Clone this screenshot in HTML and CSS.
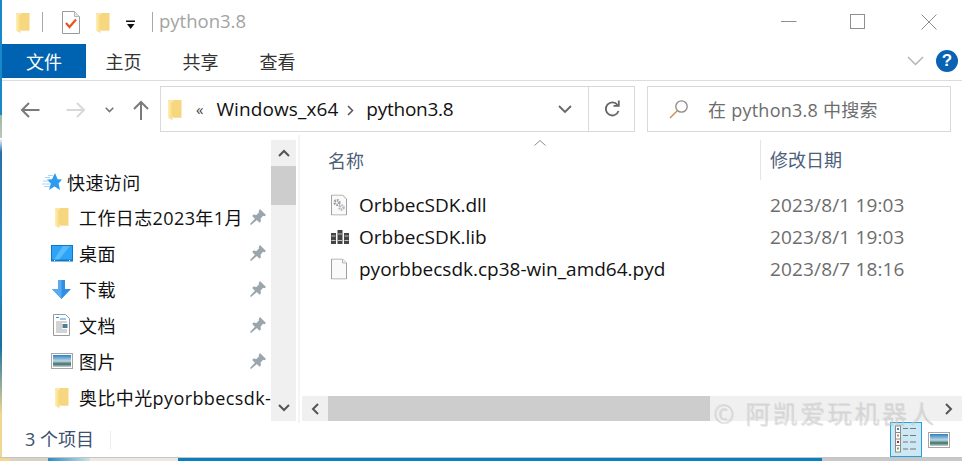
FILE: index.html
```html
<!DOCTYPE html>
<html lang="zh">
<head>
<meta charset="utf-8">
<title>python3.8</title>
<link rel="stylesheet" href="styles.css">
</head>
<body>
<svg class="defs" width="0" height="0" aria-hidden="true">
  <defs>
    <linearGradient id="fg" x1="0" y1="0" x2="1" y2="0"><stop offset="0" stop-color="#fff0b8"/><stop offset="1" stop-color="#f8d878"/></linearGradient>
    <linearGradient id="sky" x1="0" y1="0" x2="0" y2="1"><stop offset="0" stop-color="#2f7fc4"/><stop offset=".5" stop-color="#bcd8e4"/><stop offset=".75" stop-color="#3f6f62"/><stop offset="1" stop-color="#c8d4dc"/></linearGradient>
    <symbol id="folder" viewBox="0 0 14 21"><path fill="#f6d67f" d="M0 1h13.5v17H5v-.5H0z"/><path fill="url(#fg)" d="M0 1l4.500 1.800V21L0 19z"/><path fill="#fbe7a9" d="M0 1h5v2H0z"/><path fill="#e8c060" d="M5 18h8.500v.5H5z"/></symbol>
    <symbol id="pin" viewBox="0 0 16 16"><path fill="#9aa5ac" d="M10 0l6 6-1.500 1.200-1.300-.4-2.600 2.700.3 2.800-1.400 1.400-2.600-2.600L1 16l-1-1 4.900-5.300-2.700-2.700 1.400-1.400 2.800.3 2.700-2.600-.4-1.300z"/></symbol>
    <symbol id="picture" viewBox="0 0 22 16"><rect x=".5" y=".5" width="21" height="15" fill="#fff" stroke="#a6a6a6"/><rect x="2" y="2" width="18" height="12" fill="url(#sky)"/></symbol>
  </defs>
</svg>
<div class="window">
  <header class="titlebar">
    <div class="qat">
      <svg class="i-folder" width="14" height="21"><use href="#folder"/></svg>
      <span class="vsep sep-a"></span>
      <svg class="i-doc" width="18" height="23" viewBox="0 0 18 23"><path fill="#fff" stroke="#9a9a9a" d="M.5.500h12l5 5v17H.5z"/><path fill="#e6e6e6" stroke="#b5b5b5" d="M12.500.500v5h5"/><path fill="none" stroke="#e8541e" stroke-width="2.200" d="M4 12l3.500 4L14 8.500"/></svg>
      <svg class="i-folder2" width="14" height="21"><use href="#folder"/></svg>
      <svg class="i-drop" width="12" height="10" viewBox="0 0 12 10"><path d="M1 .500h9v1.400H1zM2 4h7.500L5.700 9z" fill="#111"/></svg>
      <span class="vsep sep-b"></span>
      <span class="win-title">python3.8</span>
    </div>
    <div class="winctl">
      <svg width="16" height="16" viewBox="0 0 16 16"><path d="M0 7.500h15.500" stroke="#8f8f8f"/></svg>
      <svg class="ctl-max" width="16" height="16" viewBox="0 0 16 16"><rect x=".5" y=".5" width="14" height="14" fill="none" stroke="#8f8f8f"/></svg>
      <svg width="16" height="16" viewBox="0 0 16 16"><path d="M.5.500l15 15M15.500.500l-15 15" stroke="#8f8f8f"/></svg>
    </div>
  </header>
  <nav class="ribbon">
    <span class="tab tab-file">文件</span>
    <span class="tab">主页</span>
    <span class="tab">共享</span>
    <span class="tab">查看</span>
    <span class="spring"></span>
    <svg class="i-rchev" width="17" height="10" viewBox="0 0 17 10"><path d="M1 1l7.500 7.500L16 1" fill="none" stroke="#b4b4b4" stroke-width="1.500"/></svg>
    <span class="help">?</span>
  </nav>
  <section class="navbar">
    <div class="navbtns">
      <svg width="20" height="16" viewBox="0 0 20 16"><path d="M19.500 8H2M9 1L2 8l7 7" fill="none" stroke="#7a7a7a" stroke-width="2"/></svg>
      <svg width="20" height="16" viewBox="0 0 20 16"><path d="M.5 8H18M11 1l7 7-7 7" fill="none" stroke="#d8d8d8" stroke-width="2"/></svg>
      <svg width="9" height="6" viewBox="0 0 9 6"><path d="M.7.700l3.800 3.800L8.300.700" fill="none" stroke="#777" stroke-width="1.600"/></svg>
      <svg width="16" height="20" viewBox="0 0 16 20"><path d="M8 20V2M1 9l7-7 7 7" fill="none" stroke="#7a7a7a" stroke-width="2"/></svg>
    </div>
    <div class="address">
      <svg class="i-addr-folder" width="14" height="21"><use href="#folder"/></svg>
      <span class="crumb-more">«</span>
      <span class="crumb">Windows_x64</span>
      <svg class="i-crumb" width="7" height="11" viewBox="0 0 7 11"><path d="M1 1l4.500 4.500L1 10" fill="none" stroke="#555" stroke-width="1.500"/></svg>
      <span class="crumb crumb-last">python3.8</span>
      <span class="spring"></span>
      <svg class="i-addr-chev" width="14" height="9" viewBox="0 0 14 9"><path d="M1 1l6 6 6-6" fill="none" stroke="#666" stroke-width="1.800"/></svg>
      <span class="refresh">
        <svg width="16" height="18" viewBox="0 0 16 18"><path d="M13.500 5A6.500 6.500 0 1 0 14.500 11" fill="none" stroke="#666" stroke-width="1.800"/><path d="M9.500 5.800h5.300V.500" fill="none" stroke="#666" stroke-width="1.800"/></svg>
      </span>
    </div>
    <div class="search">
      <svg width="20" height="20" viewBox="0 0 20 20"><circle cx="12.500" cy="7.500" r="5.700" fill="none" stroke="#8a8a8a" stroke-width="1.300"/><path d="M8.500 11.500L1 19" stroke="#c58f55" stroke-width="1.500"/></svg>
      <span class="search-text">在 python3.8 中搜索</span>
    </div>
  </section>
  <main class="content">
    <aside class="sidebar">
      <div class="tree">
        <div class="tree-row tree-quick">
          <svg class="i-star" width="20" height="18" viewBox="0 0 20 18"><path fill="#2d9bf0" d="M13 0l2.600 6.200L20 6.500l-3.400 4L18 17l-5.500-3.400L7 17l1.800-6.500L5 6.500l5-.3z"/><path d="M6 2.500h5M3 4.500h5M1 8h6M0 11h8M2 13.500h6" stroke="#a8d4f6"/></svg>
          <span class="tree-label">快速访问</span>
        </div>
        <div class="tree-row"><span class="slot"><svg width="14" height="21"><use href="#folder"/></svg></span><span class="tree-label">工作日志2023年1月</span><svg class="pin" width="16" height="16"><use href="#pin"/></svg></div>
        <div class="tree-row"><span class="slot"><svg width="22" height="17" viewBox="0 0 22 17"><rect width="22" height="16.500" fill="#0f78c8"/><rect x="1" y="1" width="20" height="13.500" fill="#2da4f8"/><path d="M12 1h7L8 14.500H3z" fill="#58bcfc"/><path d="M3 15.500h1M18 15.500h1" stroke="#fff"/></svg></span><span class="tree-label">桌面</span><svg class="pin" width="16" height="16"><use href="#pin"/></svg></div>
        <div class="tree-row"><span class="slot"><svg width="19" height="19" viewBox="0 0 19 19"><path d="M6 0h7v9h6l-9.500 10L0 9h6z" fill="#2f8fe6"/><path d="M6 0h3.500v19L0 9h6z" fill="#5aaaf0"/></svg></span><span class="tree-label">下载</span><svg class="pin" width="16" height="16"><use href="#pin"/></svg></div>
        <div class="tree-row"><span class="slot"><svg width="17" height="22" viewBox="0 0 17 22"><path d="M.5.500h12l4 4v17H.5z" fill="#fff" stroke="#9a9a9a"/><path d="M3 3.500h3M7 5h6" stroke="#2d8fe0"/><path d="M3 8h11M3 10h6M3 12h6M3 14h6M3 16h11M3 18h11" stroke="#a8a8a8"/><rect x="9.500" y="10" width="5" height="4" fill="#4a7f96"/></svg></span><span class="tree-label">文档</span><svg class="pin" width="16" height="16"><use href="#pin"/></svg></div>
        <div class="tree-row"><span class="slot"><svg width="22" height="16"><use href="#picture"/></svg></span><span class="tree-label">图片</span><svg class="pin" width="16" height="16"><use href="#pin"/></svg></div>
        <div class="tree-row"><span class="slot"><svg width="14" height="21"><use href="#folder"/></svg></span><span class="tree-label clip">奥比中光pyorbbecsdk-</span></div>
      </div>
      <div class="vscroll">
        <span class="sb-btn"><svg width="12" height="8" viewBox="0 0 12 8"><path d="M1 7l5-5 5 5" fill="none" stroke="#555" stroke-width="2"/></svg></span>
        <span class="sb-thumb"></span>
        <span class="spring"></span>
        <span class="sb-btn"><svg width="12" height="8" viewBox="0 0 12 8"><path d="M1 1l5 5 5-5" fill="none" stroke="#555" stroke-width="2"/></svg></span>
      </div>
    </aside>
    <section class="files">
      <svg class="sort" width="12" height="6" viewBox="0 0 12 6"><path d="M.5 5.500L6 .500l5.500 5" fill="none" stroke="#8c8c8c"/></svg>
      <div class="colhead">
        <span class="col-name">名称</span>
        <span class="col-date">修改日期</span>
      </div>
      <div class="filelist">
        <div class="file-row"><svg class="file-icon" width="16" height="21" viewBox="0 0 16 21"><path d="M.5.500h11l4 4v16H.5z" fill="#fafafa" stroke="#a0a0a0"/><circle cx="6" cy="8" r="2.300" fill="none" stroke="#a0a0a0" stroke-width="2.600" stroke-dasharray="1.500 .9"/><circle cx="10.500" cy="13" r="2.100" fill="none" stroke="#aeb8c2" stroke-width="2.400" stroke-dasharray="1.400 .8"/></svg><span class="file-name">OrbbecSDK.dll</span><span class="file-date">2023/8/1 19:03</span></div>
        <div class="file-row"><svg class="file-icon" width="18" height="14" viewBox="0 0 18 14"><path d="M0 3h5v11H0zM6.500 0h5v14h-5zM13 3h5v11h-5z" fill="#454545"/><path d="M.5 6h4M7 4h4M13.500 6h4M.5 10.500h4M7 10.500h4M13.500 10.500h4" stroke="#c4c4c4"/></svg><span class="file-name">OrbbecSDK.lib</span><span class="file-date">2023/8/1 19:03</span></div>
        <div class="file-row"><svg class="file-icon" width="16" height="21" viewBox="0 0 16 21"><path d="M.5.500h11l4 4v16H.5z" fill="#fafafa" stroke="#a0a0a0"/><path d="M11.500.500v4h4" fill="#eee" stroke="#b8b8b8"/></svg><span class="file-name">pyorbbecsdk.cp38-win_amd64.pyd</span><span class="file-date">2023/8/7 18:16</span></div>
      </div>
      <div class="hscroll">
        <span class="sb-btn-h"><svg width="8" height="12" viewBox="0 0 8 12"><path d="M7 1L2 6l5 5" fill="none" stroke="#555" stroke-width="2"/></svg></span>
        <span class="hs-thumb"></span>
        <span class="spring"></span>
        <span class="sb-btn-h"><svg width="8" height="12" viewBox="0 0 8 12"><path d="M1 1l5 5-5 5" fill="none" stroke="#555" stroke-width="2"/></svg></span>
      </div>
    </section>
  </main>
  <footer class="status">
    <span class="count">3 个项目</span>
    <span class="status-sep"></span>
    <span class="spring"></span>
    <span class="view-active">
      <svg width="22" height="28" viewBox="0 0 22 28"><rect x=".5" y="1" width="5" height="26" fill="#fff" stroke="#8a8a8a"/><path d="M.5 7.500h5M.5 14h5M.5 20.500h5" stroke="#8a8a8a"/><path fill="#3f7fc0" d="M2 3h2v2H2z"/><path fill="#c09040" d="M2 9.500h2v2H2z"/><path fill="#c62020" d="M2 16h2v2H2z"/><path fill="#80b040" d="M2 22.500h2v2H2z"/><path d="M8 3.500h5M15 3.500h6M8 10.500h5M15 10.500h6M8 17h5M15 17h6M8 24h5M15 24h6" stroke="#777"/></svg>
    </span>
    <svg class="view-large" width="22" height="16"><use href="#picture"/></svg>
  </footer>
  <div class="watermark">© 阿凯爱玩机器人</div>
  <div class="desk-left"></div>
  <div class="desk-bottom"></div>
</div>
</body>
</html>
```
FILE: styles.css
```css
* { box-sizing: border-box; }
html, body { margin: 0; padding: 0; background: #fff; overflow: hidden; }
body { font-family: "Open Sans", "Noto Sans CJK SC", sans-serif; color: #111; }
svg { display: block; flex: none; }
.defs { position: absolute; }
.spring { flex: 1; }

.window { position: relative; width: 962px; height: 461px; padding-left: 2px; padding-bottom: 4px; display: flex; flex-direction: column; overflow: hidden; }

.titlebar { height: 44px; display: flex; align-items: center; justify-content: space-between; }
.qat { display: flex; align-items: center; padding-left: 14px; }
.vsep { width: 1px; height: 20px; background: #a8a8a8; }
.sep-a { margin-left: 12px; }
.i-doc { margin-left: 19px; }
.i-folder2 { margin-left: 16px; }
.i-drop { margin-left: 15px; margin-top: 6px; }
.sep-b { margin-left: 15px; }
.win-title { margin-left: 6px; margin-top: -2px; font-size: 18.500px; color: #a3a3a3; line-height: 24px; }
.winctl { display: flex; padding-right: 25px; margin-top: -1px; }
.ctl-max { margin: 0 55px 0 53px; }

.ribbon { height: 37px; padding-bottom: 3px; display: flex; align-items: center; border-bottom: 1px solid #dcdcdc; }
.tab { font-size: 18px; width: 77px; text-align: center; color: #333; line-height: 36px; height: 34px; }
.tab-file { width: 84px; background: #0063b1; color: #fff; }
.tab-file + .tab { margin-left: -1px; }
.i-rchev { margin-right: 12px; }
.help { width: 22px; height: 22px; margin-right: 4px; border-radius: 50%; background: #0a62b5; color: #fff; font: bold 17px/22px "Liberation Sans", sans-serif; text-align: center; }

.navbar { height: 54px; display: flex; align-items: center; padding-top: 5px; padding-bottom: 3px; }
.navbtns { width: 158px; display: flex; align-items: center; padding-left: 18px; padding-top: 2px; }
.navbtns svg:nth-child(2) { margin-left: 26px; }
.navbtns svg:nth-child(3) { margin-left: 19px; }
.navbtns svg:nth-child(4) { margin-left: 19px; }
.address { width: 475px; height: 46px; border: 1px solid #d9d9d9; display: flex; align-items: center; padding-left: 7px; }
.crumb-more { margin-left: 14px; font-size: 15px; color: #444; }
.crumb { font-size: 19px; letter-spacing: .1px; color: #111; }
.crumb-last { letter-spacing: -.25px; }
.crumb-more + .crumb { margin-left: 13px; }
.i-crumb { margin: 2px 12px 0 9px; }
.i-addr-chev { margin-right: 16px; }
.refresh { width: 46px; height: 100%; border-left: 1px solid #d9d9d9; display: flex; align-items: center; justify-content: center; }
.search { width: 304px; height: 46px; margin-left: 12px; border: 1px solid #d9d9d9; display: flex; align-items: center; padding-left: 21px; }
.search-text { margin-left: 19px; font-size: 18px; letter-spacing: .25px; color: #6d6d6d; }

.content { height: 288px; display: flex; }
.sidebar { width: 298px; display: flex; border-right: 2px solid #f5f5f5; padding-right: 2px; padding-top: 5px; }
.tree { width: 269px; padding-top: 20px; overflow: hidden; }
.tree-row { height: 36px; display: flex; align-items: center; padding-left: 47px; position: relative; }
.tree-quick { padding-left: 40px; margin-top: 4px; height: 35px; }
.i-star { margin-right: 5px; }
.slot { width: 30px; display: flex; justify-content: center; flex: none; padding-right: 5px; }
.tree-label { font-size: 18px; letter-spacing: .4px; color: #111; white-space: nowrap; }
.clip { overflow: hidden; }
.pin { margin-left: auto; margin-right: 5px; }
.vscroll { width: 25px; background: #f0f0f0; display: flex; flex-direction: column; margin-bottom: 2px; }
.sb-btn { height: 26px; display: flex; align-items: center; justify-content: center; flex: none; }
.sb-thumb { height: 39px; background: #cdcdcd; flex: none; }

.files { flex: 1; margin-left: 2px; position: relative; display: flex; flex-direction: column; min-width: 0; padding-top: 5px; }
.sort { position: absolute; left: 232px; top: 5px; }
.colhead { height: 40px; display: flex; align-items: center; padding-left: 26px; position: relative; }
.col-name { width: 432px; font-size: 18px; color: #4c607a; }
.col-date { font-size: 18px; color: #4c607a; padding-left: 9px; border-left: 1px solid #e5e5e5; height: 40px; line-height: 40px; }
.filelist { flex: 1; padding-top: 9px; }
.file-row { height: 32px; display: flex; align-items: center; position: relative; padding-left: 57px; }
.file-icon { position: absolute; left: 29px; top: 50%; transform: translateY(-50%); }
.file-name { width: 411px; font-size: 19px; color: #111; white-space: nowrap; }
.file-date { font-size: 19px; letter-spacing: .15px; color: #6d6d6d; white-space: nowrap; }
.hscroll { height: 25px; margin-bottom: 2px; background: #f0f0f0; display: flex; align-items: center; }
.sb-btn-h { width: 26px; height: 100%; display: flex; align-items: center; justify-content: center; flex: none; }
.hs-thumb { width: 382px; height: 100%; background: #cdcdcd; flex: none; }

.status { height: 34px; display: flex; align-items: center; padding-left: 23px; position: relative; }
.count { font-size: 18px; color: #3c5170; margin-top: -4px; }
.status-sep { width: 1px; height: 18px; background: #ededed; margin-left: 16px; }
.view-active { width: 32px; height: 35px; margin-top: -2px; background: #cce8f5; border: 1px solid #26a0da; display: flex; align-items: center; justify-content: center; }
.view-large { margin-left: 6px; margin-right: 12px; }

.watermark { position: absolute; left: 713px; top: 398px; font-size: 25px; line-height: 30px; letter-spacing: 2.300px; color: rgba(205, 205, 205, .5); text-shadow: 1px 1px 0 rgba(170, 170, 170, .3); white-space: nowrap; }
.desk-left { position: absolute; left: 0; top: 0; bottom: 0; width: 2px; background: linear-gradient(180deg, #1a88c8 0, #1a88c8 25%, #9ab8a0 25%, #c0c8b8 30%, #fff 30%, #2a70a8 33%, #1a88c8 60%, #1a6f9f 75%, #f0d890 90%); }
.desk-bottom { position: absolute; left: 0; right: 0; bottom: 0; height: 4px; border-top: 1px solid #c4c4c4; background: linear-gradient(90deg, #f0d890 0, #f0d890 10px, #d9d2c4 10px, #d9d2c4 48px, #2a8cc4 48px, #cfe0e8 90px, #eee8e0 90px, #eee8e0 178px, #0a7fc0 178px, #0a7fc0 822px, #c8c8c8 822px); }
```
